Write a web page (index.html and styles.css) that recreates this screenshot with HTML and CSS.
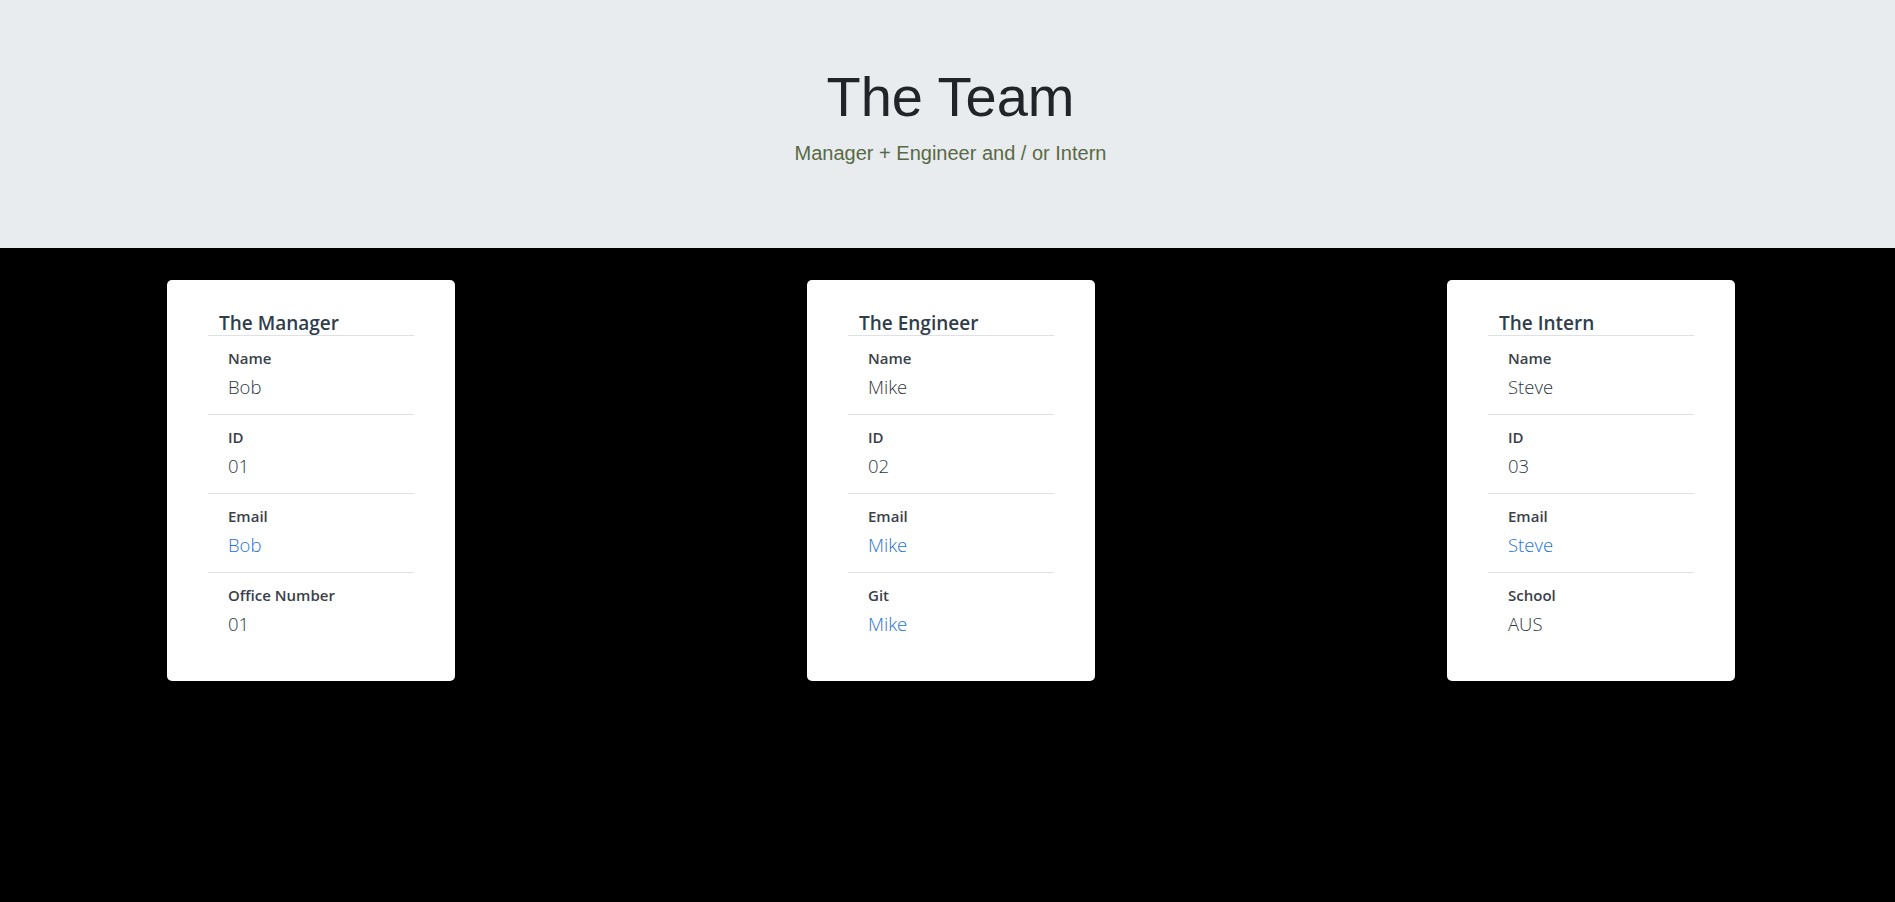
FILE: index.html
```html
<!DOCTYPE html>
<html lang="en">
<head>
<meta charset="utf-8">
<title>The Team</title>
<link rel="stylesheet" href="styles.css">
</head>
<body>
<header class="hero">
  <h1 class="hero-title">The Team</h1>
  <p class="hero-sub">Manager + Engineer and / or Intern</p>
</header>
<main class="team">
  <section class="card">
    <h2 class="card-title">The Manager</h2>
    <ul class="fields">
      <li class="field"><div class="label">Name</div><div class="value">Bob</div></li>
      <li class="field"><div class="label">ID</div><div class="value">01</div></li>
      <li class="field"><div class="label">Email</div><div class="value"><a class="link" href="#">Bob</a></div></li>
      <li class="field"><div class="label">Office Number</div><div class="value">01</div></li>
    </ul>
  </section>
  <section class="card">
    <h2 class="card-title">The Engineer</h2>
    <ul class="fields">
      <li class="field"><div class="label">Name</div><div class="value">Mike</div></li>
      <li class="field"><div class="label">ID</div><div class="value">02</div></li>
      <li class="field"><div class="label">Email</div><div class="value"><a class="link" href="#">Mike</a></div></li>
      <li class="field"><div class="label">Git</div><div class="value"><a class="link" href="#">Mike</a></div></li>
    </ul>
  </section>
  <section class="card">
    <h2 class="card-title">The Intern</h2>
    <ul class="fields">
      <li class="field"><div class="label">Name</div><div class="value">Steve</div></li>
      <li class="field"><div class="label">ID</div><div class="value">03</div></li>
      <li class="field"><div class="label">Email</div><div class="value"><a class="link" href="#">Steve</a></div></li>
      <li class="field"><div class="label">School</div><div class="value">AUS</div></li>
    </ul>
  </section>
</main>
</body>
</html>
```
FILE: styles.css
```css
html, body {
  margin: 0;
  padding: 0;
}
body {
  background: #000;
  min-height: 902px;
  font-family: "Open Sans", "Noto Sans", sans-serif;
}
.hero {
  background: #e9ecef;
  padding: 63px 26px 64px 32px;
  text-align: center;
  box-sizing: border-box;
  height: 248px;
}
.hero-title {
  margin: 0 0 8px;
  font-family: "Liberation Sans", Arial, sans-serif;
  font-weight: 400;
  font-size: 56px;
  line-height: 67px;
  color: #212529;
}
.hero-sub {
  margin: 0;
  font-family: "Liberation Sans", Arial, sans-serif;
  font-size: 20px;
  line-height: 30px;
  color: #586a45;
}
.team {
  display: grid;
  grid-template-columns: repeat(3, 640px);
  padding: 32px 0 0 167px;
}
.card {
  width: 288px;
  box-sizing: border-box;
  background: #fff;
  border-radius: 5px;
  padding: 31px 41px 30px;
}
.card-title {
  margin: 0;
  padding: 0 11px;
  font-size: 19px;
  font-weight: 600;
  line-height: 24px;
  color: #2f3d4c;
  border-bottom: 1px solid #dfe2e5;
}
.fields {
  list-style: none;
  margin: 0;
  padding: 0;
}
.field {
  padding: 12px 20px;
  border-bottom: 1px solid #dfe2e5;
}
.field:last-child {
  border-bottom: none;
}
.label {
  font-size: 15px;
  font-weight: 600;
  line-height: 20px;
  color: #3a3f4a;
}
.value {
  margin-top: 4px;
  font-size: 18.5px;
  font-weight: 300;
  line-height: 30px;
  color: #2e3741;
}
.link {
  color: #1f72de;
  text-decoration: none;
}
```
